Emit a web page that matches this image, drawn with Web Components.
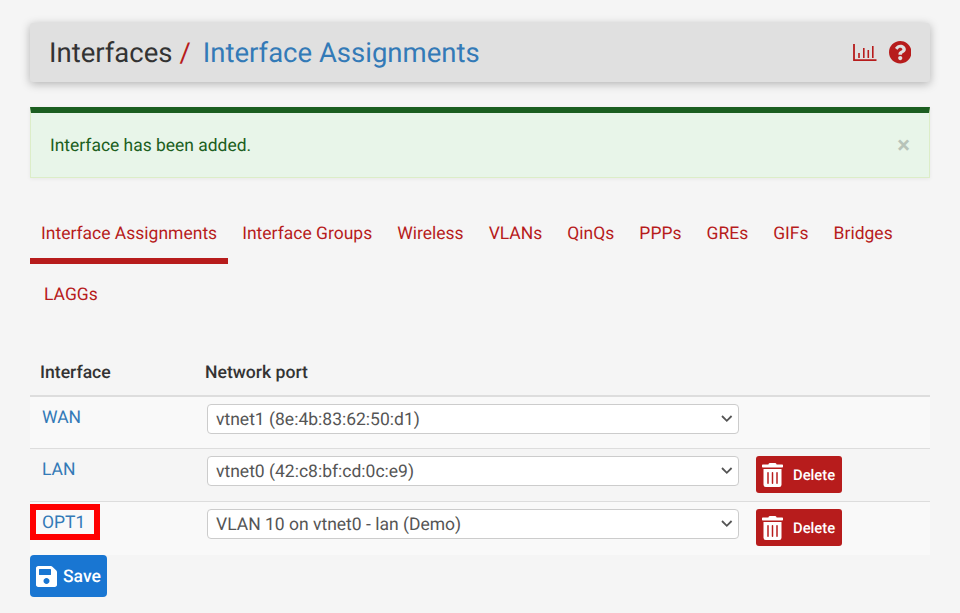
<!doctype html>
<html><head><meta charset="utf-8"><title>Interface Assignments</title>
<style>
html,body{margin:0;background:#f5f5f5;}
body{font-family:Roboto,"Liberation Sans",sans-serif;color:#333;font-size:16px;line-height:1.42857;text-rendering:geometricPrecision}
app-page{display:block;padding:23px 30px 0;height:590px;overflow:hidden}
</style></head><body>
<template id="t-head"><style>
:host{display:flex;align-items:center;justify-content:space-between;height:59px;background:#e0e0e0;border-radius:3px;padding:0 19px;box-shadow:0 2px 10px rgba(0,0,0,.28);margin-bottom:25px}
h1{margin:0;font-size:27.500px;font-weight:400;line-height:1;color:#333;display:flex;white-space:pre}
.s{color:#b71c1c;margin:0 12px 0 7px}a{color:#337ab7}
.i{display:flex;align-items:center;gap:12px}
svg{display:block;fill:#b71c1c}
</style><h1><span>Interfaces</span><span class="s">/</span><a><slot></slot></a></h1>
<div class="i"><svg width="24" height="20" viewBox="0 0 24 20"><path d="M1 1v16.200h22.500" fill="none" stroke="#b71c1c" stroke-width="1.800"/><path d="M6 15V10M10.800 15V5M15.300 15V7M19.800 15V3" fill="none" stroke="#b71c1c" stroke-width="1.600"/></svg>
<svg width="22.500" height="22.500" viewBox="8 8 496 496"><path d="M504 256c0 136.997-111.043 248-248 248S8 392.997 8 256C8 119.083 119.043 8 256 8s248 111.083 248 248zM262.655 90c-54.497 0-89.255 22.957-116.549 63.758-3.536 5.286-2.353 12.415 2.715 16.258l34.699 26.310c5.205 3.947 12.621 3.008 16.665-2.122 17.864-22.658 30.113-35.797 57.303-35.797 20.429 0 45.698 13.148 45.698 32.958 0 14.976-12.363 22.667-32.534 33.976C247.128 238.528 216 254.941 216 296v4c0 6.627 5.373 12 12 12h56c6.627 0 12-5.373 12-12v-1.333c0-28.462 83.186-29.647 83.186-106.667 0-58.002-60.165-102-116.531-102zM256 338c-25.365 0-46 20.635-46 46 0 25.364 20.635 46 46 46s46-20.636 46-46c0-25.365-20.635-46-46-46z"/></svg></div></template>

<template id="t-alert"><style>
:host{display:flex;align-items:center;justify-content:space-between;box-sizing:border-box;height:71px;background:#e8f5e9;color:#1b5e20;border:1px solid #dcedc8;border-top:6px solid #1b5e20;padding:3px 19px 0;font-size:17.450px;box-shadow:0 1px 4px rgba(0,0,0,.06);margin-bottom:26px}
b{font-size:24px;font-weight:700;color:#000;opacity:.2;line-height:1;margin-top:-3px}
</style><span><slot></slot></span><b>×</b></template>

<template id="t-tabs"><style>
:host{display:flex;flex-wrap:wrap;row-gap:0;column-gap:3px;margin-bottom:24px}
</style><slot></slot></template>

<template id="t-tab"><style>
:host{display:block;height:60px;box-sizing:border-box;padding:18px 11px 0;color:#b71c1c;font-size:17.500px;line-height:24px;white-space:nowrap}
:host([active]){border-bottom:6px solid #b71c1c}
</style><slot></slot></template>

<template id="t-table"><style>
:host{display:block}
.h{display:grid;grid-template-columns:165px 1fr;height:48px;box-sizing:border-box;border-bottom:2px solid #ddd;padding:4px 10px 0;align-items:center;font-weight:500;font-size:17.600px}
</style><div class="h"><span>Interface</span><span>Network port</span></div><slot></slot></template>

<template id="t-row"><style>
:host{display:grid;grid-template-columns:177px 532px 1fr;box-sizing:border-box;height:53px;border-top:1px solid #ddd;background:#f5f5f5;padding:7px 0 0 0}
:host([odd]){background:#f9f9f9}
:host(:first-of-type){border-top:0;height:51px}
:host(:last-of-type){height:54px}
.n{position:relative;padding:2px 0 0 12px;color:#337ab7;font-size:17.500px;line-height:24px;width:max-content}
.m{position:absolute;left:0;top:-5px;width:70px;height:36px;box-sizing:border-box;border:6px solid #f00}
select{display:block;width:532px;height:30px;box-sizing:border-box;font:17.500px Roboto,sans-serif;text-rendering:geometricPrecision;color:#555;background:#fff url("data:image/svg+xml,%3Csvg xmlns='http://www.w3.org/2000/svg' width='12' height='8'%3E%3Cpath d='M1 1l4.800 4.800 4.800-4.800' fill='none' stroke='%23555' stroke-width='1.800'/%3E%3C/svg%3E") no-repeat right 5px center;appearance:none;-webkit-appearance:none;border:1px solid #ccc;border-radius:4px;padding:2px 8px 0}
.a{padding-left:17px}
</style><div class="n"><slot name="name"></slot><span class="m" id="m" hidden></span></div><div><select aria-label="Network port"><option id="o"></option></select></div><div class="a"><slot name="action"></slot></div></template>

<template id="t-btn"><style>
:host{display:inline-flex;align-items:center;box-sizing:border-box;height:37px;width:86px;background:#b71c1c;color:#fff;border-radius:3px;padding-left:6px;font-size:14.800px;font-weight:500;gap:10px}
svg{display:block;fill:currentColor}
span{display:block}
.t{padding-top:3px}
:host([save]){background:#1976d2;width:77px;height:42px;border-radius:4px;font-size:17.500px;gap:6px}
</style><span id="ic"></span><span class="t"><slot></slot></span></template>

<script>
function tpl(id){return document.getElementById(id).content.cloneNode(true)}
const ICONS={
 trash:'<svg width="21" height="24" viewBox="0 0 448 512" style="display:block"><path d="M32 464a48 48 0 0 0 48 48h288a48 48 0 0 0 48-48V128H32zm272-256a16 16 0 0 1 32 0v224a16 16 0 0 1-32 0zm-96 0a16 16 0 0 1 32 0v224a16 16 0 0 1-32 0zm-96 0a16 16 0 0 1 32 0v224a16 16 0 0 1-32 0zM432 32H312l-9.400-18.700A24 24 0 0 0 281.100 0H166.800a23.720 23.720 0 0 0-21.400 13.300L136 32H16A16 16 0 0 0 0 48v32a16 16 0 0 0 16 16h416a16 16 0 0 0 16-16V48a16 16 0 0 0-16-16z"/></svg>',
 save:'<svg width="21" height="21" viewBox="0 32 448 448" style="display:block"><path d="M433.941 129.941l-83.882-83.882A48 48 0 0 0 316.118 32H48C21.490 32 0 53.490 0 80v352c0 26.510 21.490 48 48 48h352c26.510 0 48-21.490 48-48V163.882a48 48 0 0 0-14.059-33.941zM224 416c-35.346 0-64-28.654-64-64 0-35.346 28.654-64 64-64s64 28.654 64 64c0 35.346-28.654 64-64 64zm96-304.520V212c0 6.627-5.373 12-12 12H76c-6.627 0-12-5.373-12-12V108c0-6.627 5.373-12 12-12h228.520c3.183 0 6.235 1.264 8.485 3.515l3.480 3.480A11.996 11.996 0 0 1 320 111.480z"/></svg>'};
function simple(name,id,init){customElements.define(name,class extends HTMLElement{constructor(){super();this.attachShadow({mode:'open'}).append(tpl(id));}connectedCallback(){init&&init(this)}})}
customElements.define('app-page',class extends HTMLElement{constructor(){super();this.attachShadow({mode:'open'}).innerHTML='<slot></slot>'}});
simple('page-head','t-head');simple('alert-box','t-alert');simple('tab-nav','t-tabs');simple('tab-item','t-tab');simple('assign-table','t-table');
simple('assign-row','t-row',e=>{const s=e.shadowRoot;s.getElementById('o').textContent=e.getAttribute('port');s.getElementById('m').hidden=!e.hasAttribute('marked')});
simple('icon-btn','t-btn',e=>{e.shadowRoot.getElementById('ic').innerHTML=ICONS[e.getAttribute('icon')]});
</script>
<app-page>
<page-head>Interface Assignments</page-head>
<alert-box>Interface has been added.</alert-box>
<tab-nav>
<tab-item active>Interface Assignments</tab-item><tab-item>Interface Groups</tab-item><tab-item>Wireless</tab-item><tab-item>VLANs</tab-item><tab-item>QinQs</tab-item><tab-item>PPPs</tab-item><tab-item>GREs</tab-item><tab-item>GIFs</tab-item><tab-item>Bridges</tab-item><tab-item style="margin:1px 0 0 3px">LAGGs</tab-item>
</tab-nav>
<assign-table>
<assign-row odd port="vtnet1 (8e:4b:83:62:50:d1)"><span slot="name">WAN</span></assign-row>
<assign-row port="vtnet0 (42:c8:bf:cd:0c:e9)"><span slot="name">LAN</span><icon-btn slot="action" icon="trash">Delete</icon-btn></assign-row>
<assign-row odd marked port="VLAN 10 on vtnet0 - lan (Demo)"><span slot="name">OPT1</span><icon-btn slot="action" icon="trash">Delete</icon-btn></assign-row>
</assign-table>
<icon-btn save icon="save">Save</icon-btn>
</app-page>
</body></html>
